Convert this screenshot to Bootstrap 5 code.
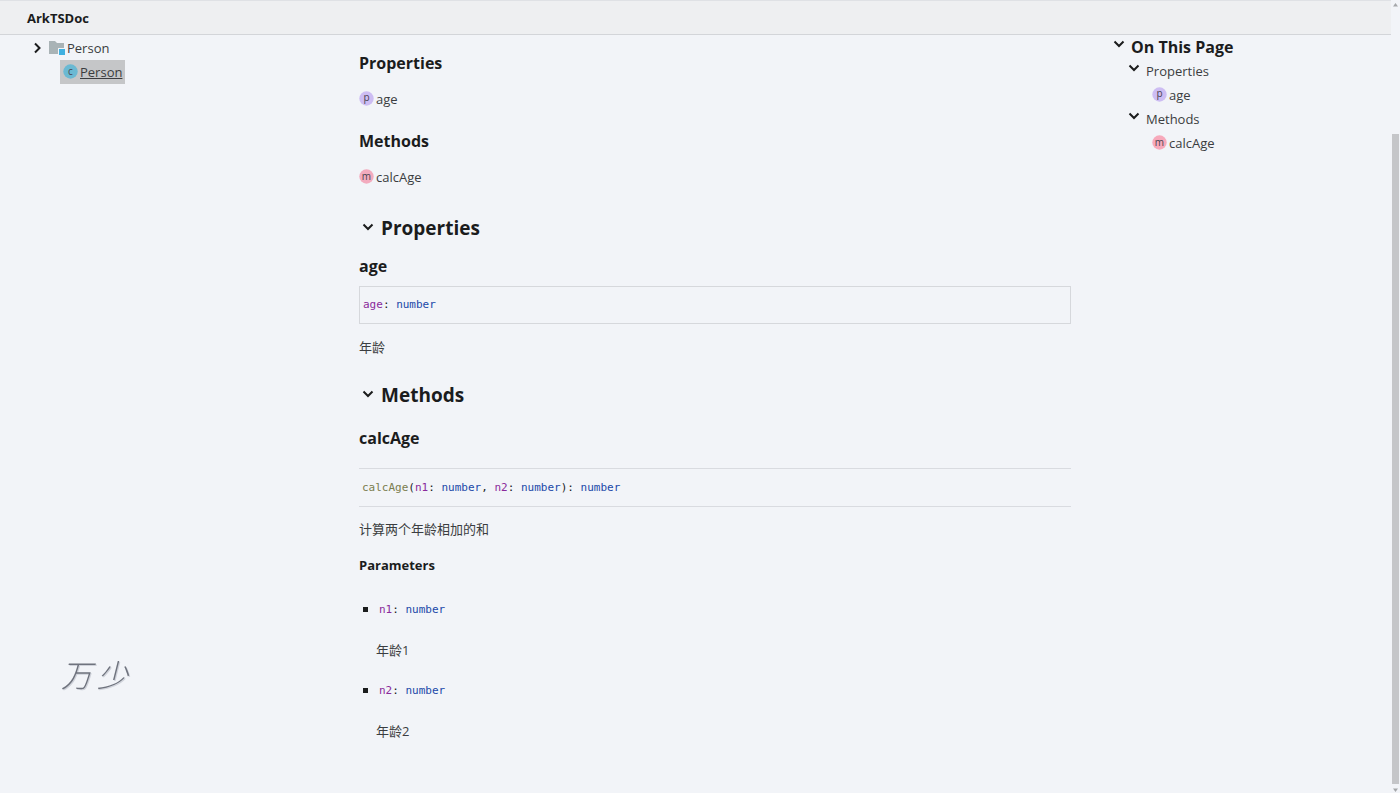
<!DOCTYPE html>
<html lang="en">
<head>
<meta charset="utf-8">
<meta name="viewport" content="width=device-width, initial-scale=1">
<title>Person | ArkTSDoc</title>
<link href="https://cdn.jsdelivr.net/npm/bootstrap@5.3.0/dist/css/bootstrap.min.css" rel="stylesheet">
<style>
  body { background: #f2f4f8; color: #3b3d40; font: 13px/24px "Open Sans", "Noto Sans CJK SC", sans-serif; }
  a { color: inherit; text-decoration: none; }
  h2, h3, h4, .site-title { color: #1b1c1d; margin: 0; font-weight: 700; }
  .site-bar { height: 35px; background: #eeeff1; border-top: 1px solid #dfe1e5; border-bottom: 1px solid #d3d5d9; padding: 0 27px; }
  .doc-grid { display: grid; grid-template-columns: minmax(0, 292fr) minmax(0, 712fr) minmax(0, 253fr); gap: 40px; padding: 0 27px; }
  h2 { font-size: 19px; line-height: 32px; }
  h3 { font-size: 16px; line-height: 24px; }
  h4 { font-size: 13px; line-height: 24px; }
  .main-col { padding: 16px 0 48px; }
  .index-group { display: grid; gap: 12px; margin-bottom: 18px; }
  .member-group { padding-top: 5px; }
  .member-group + .member-group { margin-top: 15px; }
  .property-name { margin-top: 10px; }
  .method-name { margin-top: 15px; }
  summary { list-style: none; display: flex; align-items: center; }
  summary::-webkit-details-marker { display: none; }
  .chev { width: 12px; height: 12px; fill: none; stroke: #1b1c1d; stroke-width: 2; flex: none; }
  .section-head { gap: 7px; padding-left: 3px; }
  .section-head .chev { margin-bottom: 3px; }
  .kind { width: 15px; height: 15px; flex: none; margin-bottom: 2px; }
  .kind text { font-size: 10px; fill: #4a4450; text-anchor: middle; }
  .entry { display: inline-flex; align-items: center; gap: 2px; vertical-align: top; }
  .current { background: #c5c6c8; padding: 0 3px; margin-left: 33px; text-decoration: underline; }
  .side { padding-top: 1px; }
  .module-row { gap: 6px; padding-left: 4px; }
  .toc { padding: 0 2px; }
  .toc summary { gap: 6px; }
  .toc .chev { margin-bottom: 6px; }
  .toc .toc-title { font-size: 16px; color: #1b1c1d; }
  .toc-group { padding-left: 15px; }
  .toc-group .entry { margin-left: 24px; }
  .signature { font: 11px/24px "DejaVu Sans Mono", monospace; color: #1b1c1d; }
  .boxed { border: 1px solid #d6d8dc; padding: 6px 3px; margin: 8px 0 11px; }
  .ruled { border-top: 1px solid #d9dbe0; border-bottom: 1px solid #d9dbe0; padding: 7px 3px 6px; margin: 18px 0 10px; }
  .t-name { color: #8a2a9b; }
  .t-type { color: #2148a8; }
  .t-call { color: #7b7d4f; }
  .params { list-style: none; padding: 0; margin: 21px 0 0; display: grid; gap: 17px; }
  .params li { padding-left: 17px; position: relative; }
  .params li::before { content: ""; position: absolute; left: 4px; top: 9px; width: 5px; height: 5px; background: #1b1c1d; }
  .params .signature { padding-left: 3px; margin-bottom: 16px; }
  .track { width: 9px; min-height: 100vh; padding: 3px 0 1px; }
  .track svg { width: 5px; height: 4px; fill: #a5a7aa; }
  .thumb { background: #c5c6c9; width: 7px; height: 82vh; }
  .brushmark { position: fixed; left: 61px; bottom: 95px; gap: 5px; font: italic 300 31px/48px "Noto Sans CJK SC", sans-serif; color: #6f737e; text-shadow: 1px 1px 0 #cfd2da; }
</style>
<script src="https://cdn.jsdelivr.net/npm/bootstrap@5.3.0/dist/js/bootstrap.bundle.min.js"></script>
</head>
<body>
<div class="d-flex">
  <div class="flex-grow-1">
    <header class="site-bar d-flex align-items-center"><a class="site-title" href="#">ArkTSDoc</a></header>
    <div class="doc-grid">
      <nav class="side" aria-label="Modules">
        <div class="module-row d-flex align-items-center">
          <svg class="chev" viewBox="0 0 12 12"><path d="M4 1.5 8.5 6 4 10.5"/></svg>
          <a class="entry" href="#"><svg width="16" height="16" viewBox="0 0 16 16"><path d="M0 1h6l2 2h7v11H0z" fill="#a9b3b6"/><path d="M9 8h7v7H9z" fill="#f2f4f8"/><path d="M10 9h6v6h-6z" fill="#40b0e0"/></svg>Person</a>
        </div>
        <a class="entry current" href="#"><svg class="kind" viewBox="0 0 15 15"><circle cx="7.5" cy="7.5" r="7.2" fill="#6bb9d3"/><text x="7.5" y="10.5">c</text></svg>Person</a>
      </nav>

      <main class="main-col">
        <section class="index-group">
          <h3>Properties</h3>
          <a class="entry" href="#age"><svg class="kind" viewBox="0 0 15 15"><circle cx="7.5" cy="7.5" r="7.2" fill="#cdbdf3"/><text x="7.5" y="10">p</text></svg>age</a>
        </section>
        <section class="index-group">
          <h3>Methods</h3>
          <a class="entry" href="#calcAge"><svg class="kind" viewBox="0 0 15 15"><circle cx="7.5" cy="7.5" r="7.2" fill="#f3abbe"/><text x="7.5" y="10.5">m</text></svg>calcAge</a>
        </section>

        <details class="member-group" open>
          <summary class="section-head"><svg class="chev" viewBox="0 0 12 12"><path d="M1.5 3.5 6 8 10.5 3.5"/></svg><h2>Properties</h2></summary>
          <h3 class="property-name" id="age">age</h3>
          <div class="signature boxed"><span class="t-name">age</span>: <span class="t-type">number</span></div>
          <p class="mb-0">年龄</p>
        </details>

        <details class="member-group" open>
          <summary class="section-head"><svg class="chev" viewBox="0 0 12 12"><path d="M1.5 3.5 6 8 10.5 3.5"/></svg><h2>Methods</h2></summary>
          <h3 class="method-name" id="calcAge">calcAge</h3>
          <div class="signature ruled"><span class="t-call">calcAge</span>(<span class="t-name">n1</span>: <span class="t-type">number</span>, <span class="t-name">n2</span>: <span class="t-type">number</span>): <span class="t-type">number</span></div>
          <p class="mb-2 pb-1">计算两个年龄相加的和</p>
          <h4>Parameters</h4>
          <ul class="params">
            <li><div class="signature"><span class="t-name">n1</span>: <span class="t-type">number</span></div><p class="mb-0">年龄1</p></li>
            <li><div class="signature"><span class="t-name">n2</span>: <span class="t-type">number</span></div><p class="mb-0">年龄2</p></li>
          </ul>
        </details>
      </main>

      <aside class="toc">
        <details open>
          <summary><svg class="chev" viewBox="0 0 12 12"><path d="M1.5 3.5 6 8 10.5 3.5"/></svg><span class="toc-title fw-bold">On This Page</span></summary>
          <details class="toc-group" open>
            <summary><svg class="chev" viewBox="0 0 12 12"><path d="M1.5 3.5 6 8 10.5 3.5"/></svg><a href="#age">Properties</a></summary>
            <a class="entry" href="#age"><svg class="kind" viewBox="0 0 15 15"><circle cx="7.5" cy="7.5" r="7.2" fill="#cdbdf3"/><text x="7.5" y="10">p</text></svg>age</a>
          </details>
          <details class="toc-group" open>
            <summary><svg class="chev" viewBox="0 0 12 12"><path d="M1.5 3.5 6 8 10.5 3.5"/></svg><a href="#calcAge">Methods</a></summary>
            <a class="entry" href="#calcAge"><svg class="kind" viewBox="0 0 15 15"><circle cx="7.5" cy="7.5" r="7.2" fill="#f7a9bb"/><text x="7.5" y="10.5">m</text></svg>calcAge</a>
          </details>
        </details>
      </aside>
    </div>
  </div>
  <div class="track d-flex flex-column align-items-center" aria-hidden="true">
    <svg viewBox="0 0 5 4"><path d="M0 3.5 2.5 0 5 3.5z"/></svg>
    <div class="thumb mt-auto"></div>
    <svg class="mt-1" viewBox="0 0 5 4"><path d="M0 .5h5L2.5 4z"/></svg>
  </div>
</div>
<div class="brushmark d-flex"><span>万</span><span>少</span></div>
</body>
</html>
